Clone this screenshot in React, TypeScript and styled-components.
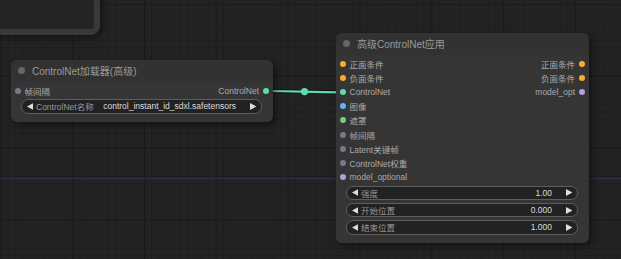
import React from 'react';
import styled, { createGlobalStyle } from 'styled-components';

const Global = createGlobalStyle`
  html, body { margin: 0; padding: 0; background: #222; }
  body { font-family: "Liberation Sans", "Noto Sans CJK SC", sans-serif; }
  #root { width: 621px; height: 259px; }
`;

const Canvas = styled.div`
  position: relative;
  width: 621px;
  height: 259px;
  overflow: hidden;
  background-color: #232323;
  background-image:
    linear-gradient(to right, #1a1a1a 1px, transparent 1px),
    linear-gradient(to bottom, #1a1a1a 1px, transparent 1px),
    linear-gradient(to right, #1e1e1e 1px, transparent 1px),
    linear-gradient(to bottom, #1e1e1e 1px, transparent 1px);
  background-size: 71.8px 71.8px, 71.8px 71.8px, 7.18px 7.18px, 7.18px 7.18px;
  background-position: 0.5px 0, 0 4px, 0.5px 0, 0 4px;
`;

const GroupBox = styled.div`
  position: absolute;
  left: -30px;
  top: -30px;
  width: 130px;
  height: 65px;
  box-sizing: border-box;
  border: 6px solid #393939;
  border-radius: 9px;
  background: #242424;
  box-shadow: 2px 2px 6px rgba(0, 0, 0, 0.5);
`;

const Guide = styled.div<{ $y: number }>`
  position: absolute;
  left: 0;
  right: 0;
  top: ${(p) => p.$y}px;
  height: 1px;
  background: #2c3446;
`;

const LinkLayer = styled.svg`
  position: absolute;
  left: 0;
  top: 0;
  pointer-events: none;
`;

const Node = styled.div<{ $x: number; $y: number; $w: number }>`
  position: absolute;
  left: ${(p) => p.$x}px;
  top: ${(p) => p.$y}px;
  width: ${(p) => p.$w}px;
  background: #353535;
  border-radius: 6px;
  box-shadow: 3px 3px 7px rgba(0, 0, 0, 0.45);
  display: flex;
  flex-direction: column;
  padding-bottom: 8px;
`;

const Title = styled.div`
  height: 21.5px;
  display: flex;
  align-items: center;
  padding-left: 7px;
  background: #323232;
  border-radius: 6px 6px 0 0;
  color: #999;
  font-size: 10px;
  white-space: nowrap;
`;

const TitleDot = styled.span`
  width: 7px;
  height: 7px;
  border-radius: 50%;
  background: #666;
  margin-right: 7px;
  flex: none;
`;

const Slots = styled.div`
  display: flex;
  flex-direction: column;
  padding-top: 2px;
`;

const Row = styled.div`
  height: 14.2px;
  display: flex;
  align-items: center;
  justify-content: space-between;
  font-size: 8.5px;
  color: #aaa;
  white-space: nowrap;
`;

const Slot = styled.div<{ $out?: boolean }>`
  display: flex;
  align-items: center;
  gap: 4px;
  flex-direction: ${(p) => (p.$out ? 'row-reverse' : 'row')};
  padding: ${(p) => (p.$out ? '0 4px 0 0' : '0 0 0 3.5px')};
`;

const Dot = styled.span<{ $c: string }>`
  width: 6px;
  height: 6px;
  border-radius: 50%;
  background: ${(p) => p.$c};
  flex: none;
`;

const Widgets = styled.div`
  display: flex;
  flex-direction: column;
  gap: 2.8px;
  padding: 1.6px 11px 0 10px;
`;

const Widget = styled.div`
  height: 14.4px;
  box-sizing: border-box;
  border: 1px solid #5e5e5e;
  border-radius: 7.2px;
  background: #222;
  display: flex;
  align-items: center;
  padding: 0 5px 0 4.5px;
  font-size: 8.5px;
  white-space: nowrap;
`;

const WLabel = styled.span`
  color: #999;
  margin-left: 3px;
`;

const WValue = styled.span`
  color: #ddd;
  margin-left: auto;
  margin-right: 13.5px;
`;

const Arrow = ({ dir }: { dir: 'l' | 'r' }) => (
  <svg width="6.5" height="7" viewBox="0 0 6.5 7" style={{ flex: 'none' }}>
    <polygon points={dir === 'l' ? '6.5,0 6.5,7 0,3.5' : '0,0 0,7 6.5,3.5'} fill="#ddd" />
  </svg>
);

const C = {
  cond: '#ffa931',
  cnet: '#5fdcaa',
  image: '#64b5f6',
  mask: '#81c784',
  gray: '#787887',
  model: '#b39ddb',
};

type SlotDef = { label: string; color: string };

const inputs: SlotDef[] = [
  { label: '正面条件', color: C.cond },
  { label: '负面条件', color: C.cond },
  { label: 'ControlNet', color: C.cnet },
  { label: '图像', color: C.image },
  { label: '遮罩', color: C.mask },
  { label: '帧间隔', color: C.gray },
  { label: 'Latent关键帧', color: C.gray },
  { label: 'ControlNet权重', color: C.gray },
  { label: 'model_optional', color: C.model },
];

const outputs: SlotDef[] = [
  { label: '正面条件', color: C.cond },
  { label: '负面条件', color: C.cond },
  { label: 'model_opt', color: C.model },
];

const widgets = [
  { label: '强度', value: '1.00' },
  { label: '开始位置', value: '0.000' },
  { label: '结束位置', value: '1.000' },
];

export default function App() {
  return (
    <>
      <Global />
      <Canvas>
        <GroupBox />
        <Guide $y={178} />
        <LinkLayer width={621} height={259}>
          <path d="M267 91 C 300 91, 305 92.3, 342 92.3" stroke="rgba(0,0,0,0.45)" strokeWidth={4} fill="none" />
          <path d="M267 91 C 300 91, 305 92.3, 342 92.3" stroke={C.cnet} strokeWidth={2.2} fill="none" />
          <circle cx={304.5} cy={91.6} r={3.6} fill={C.cnet} />
        </LinkLayer>

        <Node $x={11} $y={60} $w={262}>
          <Title>
            <TitleDot />
            ControlNet加载器(高级)
          </Title>
          <Slots>
            <Row>
              <Slot>
                <Dot $c={C.gray} />
                帧间隔
              </Slot>
              <Slot $out>
                <Dot $c={C.cnet} />
                ControlNet
              </Slot>
            </Row>
          </Slots>
          <Widgets>
            <Widget>
              <Arrow dir="l" />
              <WLabel>ControlNet名称</WLabel>
              <WValue>control_instant_id_sdxl.safetensors</WValue>
              <Arrow dir="r" />
            </Widget>
          </Widgets>
        </Node>

        <Node $x={336} $y={33} $w={253}>
          <Title>
            <TitleDot />
            高级ControlNet应用
          </Title>
          <Slots>
            {inputs.map((s, i) => (
              <Row key={s.label}>
                <Slot>
                  <Dot $c={s.color} />
                  {s.label}
                </Slot>
                {outputs[i] && (
                  <Slot $out>
                    <Dot $c={outputs[i].color} />
                    {outputs[i].label}
                  </Slot>
                )}
              </Row>
            ))}
          </Slots>
          <Widgets>
            {widgets.map((w) => (
              <Widget key={w.label}>
                <Arrow dir="l" />
                <WLabel>{w.label}</WLabel>
                <WValue>{w.value}</WValue>
                <Arrow dir="r" />
              </Widget>
            ))}
          </Widgets>
        </Node>
      </Canvas>
    </>
  );
}
